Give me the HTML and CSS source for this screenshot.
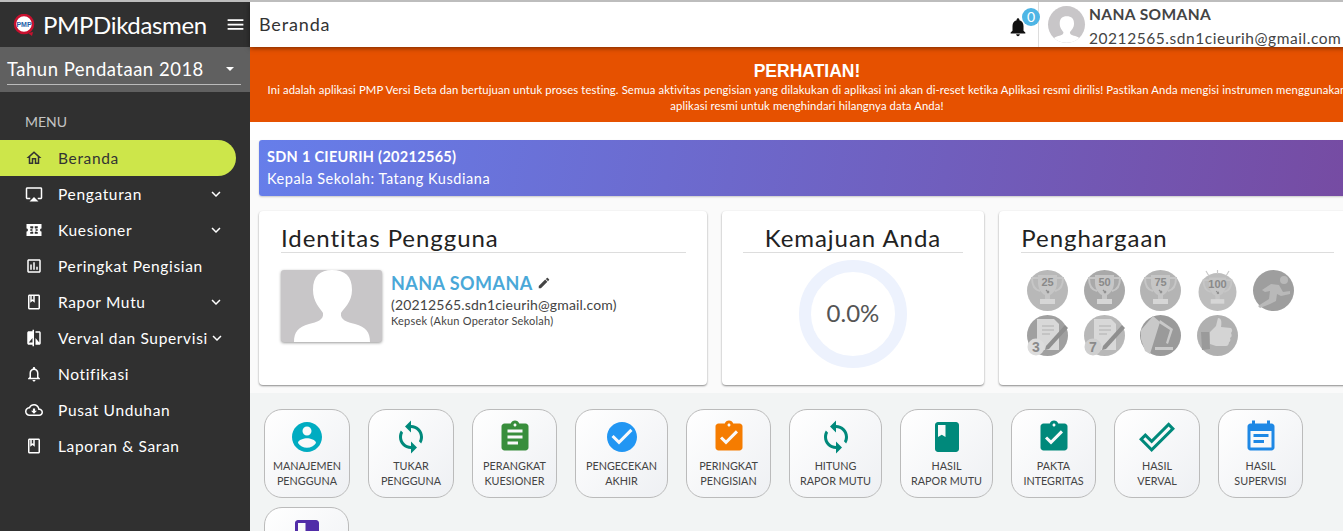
FILE: index.html
```html
<!DOCTYPE html>
<html>
	<head>
		<meta charset="UTF-8">
		<title>PMP Dikdasmen</title>
		<link rel="stylesheet" href="styles.css">
	</head>
	<body>
		<svg class="sprite">
			<symbol id="i-home" viewBox="0 0 24 24"><path d="M12 5.69l5 4.500V18h-2v-6H9v6H7v-7.810l5-4.500M12 3L2 12h3v8h6v-6h2v6h6v-8h3L12 3z"/></symbol>
			<symbol id="i-airplay" viewBox="0 0 24 24"><path d="M6 22h12l-6-6zM21 3H3c-1.100 0-2 .9-2 2v12c0 1.100.9 2 2 2h4v-2H3V5h18v12h-4v2h4c1.100 0 2-.9 2-2V5c0-1.100-.9-2-2-2z"/></symbol>
			<symbol id="i-ticket" viewBox="0 0 24 24"><path fill-rule="evenodd" d="M2 4h20v6c-1.100 0-2 .9-2 2s.9 2 2 2v6H2v-6c1.100 0 2-.9 2-2s-.9-2-2-2V4zm5 3v2.500h2v1.500H7v2h2v1.500H7V17h4v-2.500H9.800v-5H11V7H7zm6 0v2.500h1.200v5H13V17h4v-2.500h-2V13h2v-2h-2V9.500h2V7h-4z"/></symbol>
			<symbol id="i-poll" viewBox="0 0 24 24"><path d="M19 3H5c-1.100 0-2 .9-2 2v14c0 1.100.9 2 2 2h14c1.100 0 2-.9 2-2V5c0-1.100-.9-2-2-2zm0 16H5V5h14v14zM7 10h2v7H7zm4-3h2v10h-2zm4 6h2v4h-2z"/></symbol>
			<symbol id="i-book-line" viewBox="0 0 24 24"><path d="M18 2H6c-1.100 0-2 .9-2 2v16c0 1.100.9 2 2 2h12c1.100 0 2-.9 2-2V4c0-1.100-.9-2-2-2zM9 4h2v5l-1-.75L9 9V4zm9 16H6V4h1v9l3-2.250L13 13V4h5v16z"/></symbol>
			<symbol id="i-compare" viewBox="0 0 24 24"><path d="M10 3H5c-1.100 0-2 .9-2 2v14c0 1.100.9 2 2 2h5v2h2V1h-2v2zm0 15H5l5-6v6zm9-15h-5v2h5v13l-5-6v9h5c1.100 0 2-.9 2-2V5c0-1.100-.9-2-2-2z"/></symbol>
			<symbol id="i-bell-line" viewBox="0 0 24 24"><path d="M12 22c1.100 0 2-.9 2-2h-4c0 1.100.9 2 2 2zm6-6v-5c0-3.070-1.630-5.640-4.500-6.320V4c0-.83-.67-1.500-1.500-1.500s-1.500.67-1.500 1.500v.68C7.640 5.360 6 7.920 6 11v5l-2 2v1h16v-1l-2-2zm-2 1H8v-6c0-2.480 1.510-4.500 4-4.500s4 2.020 4 4.500v6z"/></symbol>
			<symbol id="i-cloud" viewBox="0 0 24 24"><path d="M19.350 10.040C18.670 6.590 15.640 4 12 4 9.110 4 6.600 5.640 5.350 8.040 2.340 8.360 0 10.910 0 14c0 3.310 2.690 6 6 6h13c2.760 0 5-2.240 5-5 0-2.640-2.050-4.780-4.650-4.960zM19 18H6c-2.210 0-4-1.790-4-4 0-2.050 1.530-3.760 3.560-3.970l1.070-.11.5-.95C8.080 7.140 9.940 6 12 6c2.620 0 4.880 1.860 5.390 4.430l.3 1.500 1.530.11c1.560.1 2.780 1.410 2.780 2.960 0 1.650-1.350 3-3 3zm-5.550-8h-2.900v3H8l4 4 4-4h-2.550z"/></symbol>
			<symbol id="i-chevron" viewBox="0 0 24 24"><path d="M16.590 8.590L12 13.170 7.410 8.590 6 10l6 6 6-6z"/></symbol>
			<symbol id="i-menu" viewBox="0 0 24 24"><path d="M3 18h18v-2H3v2zm0-5h18v-2H3v2zm0-7v2h18V6H3z"/></symbol>
			<symbol id="i-bell" viewBox="0 0 24 24"><path d="M12 22c1.100 0 2-.9 2-2h-4c0 1.100.89 2 2 2zm6-6v-5c0-3.070-1.640-5.640-4.500-6.320V4c0-.83-.67-1.500-1.500-1.500s-1.500.67-1.500 1.500v.68C7.630 5.360 6 7.920 6 11v5l-2 2v1h16v-1l-2-2z"/></symbol>
			<symbol id="i-edit" viewBox="0 0 24 24"><path d="M3 17.250V21h3.750L17.810 9.940l-3.750-3.750L3 17.250zM20.710 7.040c.39-.39.39-1.020 0-1.410l-2.340-2.340c-.39-.39-1.020-.39-1.410 0l-1.830 1.830 3.750 3.750 1.830-1.830z"/></symbol>
			<symbol id="i-person" viewBox="0 0 24 24"><path d="M12 2C6.480 2 2 6.480 2 12s4.480 10 10 10 10-4.480 10-10S17.520 2 12 2zm0 3c1.660 0 3 1.340 3 3s-1.340 3-3 3-3-1.340-3-3 1.340-3 3-3zm0 14.200c-2.500 0-4.710-1.280-6-3.220.03-1.990 4-3.080 6-3.080 1.990 0 5.970 1.090 6 3.080-1.290 1.940-3.500 3.220-6 3.220z"/></symbol>
			<symbol id="i-sync" viewBox="0 0 24 24"><path d="M12 4V1L8 5l4 4V6c3.310 0 6 2.690 6 6 0 1.010-.25 1.970-.7 2.800l1.460 1.460C19.540 15.030 20 13.570 20 12c0-4.420-3.580-8-8-8zm0 14c-3.310 0-6-2.690-6-6 0-1.010.25-1.970.7-2.800L5.240 7.740C4.460 8.970 4 10.430 4 12c0 4.420 3.580 8 8 8v3l4-4-4-4v3z"/></symbol>
			<symbol id="i-assign" viewBox="0 0 24 24"><path d="M19 3h-4.180C14.400 1.840 13.300 1 12 1c-1.300 0-2.400.84-2.820 2H5c-1.100 0-2 .9-2 2v14c0 1.100.9 2 2 2h14c1.100 0 2-.9 2-2V5c0-1.100-.9-2-2-2zm-7 0c.55 0 1 .45 1 1s-.45 1-1 1-1-.45-1-1 .45-1 1-1zm2 14H7v-2h7v2zm3-4H7v-2h10v2zm0-4H7V7h10v2z"/></symbol>
			<symbol id="i-check" viewBox="0 0 24 24"><path d="M12 2C6.480 2 2 6.480 2 12s4.480 10 10 10 10-4.480 10-10S17.520 2 12 2zm-2 15l-5-5 1.410-1.410L10 14.170l7.590-7.590L19 8l-9 9z"/></symbol>
			<symbol id="i-assign-ok" viewBox="0 0 24 24"><path d="M19 3h-4.180C14.400 1.840 13.300 1 12 1c-1.300 0-2.400.84-2.820 2H5c-1.100 0-2 .9-2 2v14c0 1.100.9 2 2 2h14c1.100 0 2-.9 2-2V5c0-1.100-.9-2-2-2zm-7 0c.55 0 1 .45 1 1s-.45 1-1 1-1-.45-1-1 .45-1 1-1zm-2 14l-4-4 1.410-1.410L10 14.170l6.590-6.590L18 9l-8 8z"/></symbol>
			<symbol id="i-book" viewBox="0 0 24 24"><path d="M18 2H6c-1.100 0-2 .9-2 2v16c0 1.100.9 2 2 2h12c1.100 0 2-.9 2-2V4c0-1.100-.9-2-2-2zM6 4h5v8l-2.500-1.500L6 12V4z"/></symbol>
			<symbol id="i-done" viewBox="0 0 24 24"><path d="M19.770 5.030l1.400 1.400L8.430 19.170l-5.600-5.600 1.400-1.400 4.200 4.200L19.770 5.030m0-2.830L8.430 13.540l-4.200-4.200L0 13.570 8.430 22 24 6.430 19.770 2.200z"/></symbol>
			<symbol id="i-event" viewBox="0 0 24 24"><path d="M17 10H7v2h10v-2zm2-7h-1V1h-2v2H8V1H6v2H5c-1.110 0-1.990.9-1.990 2L3 19c0 1.100.89 2 2 2h14c1.100 0 2-.9 2-2V5c0-1.100-.9-2-2-2zm0 16H5V8h14v11zm-5-5H7v2h7v-2z"/></symbol>
			<symbol id="i-silhouette" viewBox="0 0 101 72"><path d="M51 0C64 0 71 6 71 20C71 32 63 38 60 43C59 50 66 52 74 54C85 57 89 62 89 72H13C13 62 17 57 28 54C36 52 43 50 42 43C39 38 32 32 32 20C32 6 39 0 51 0Z"/></symbol>
			<symbol id="b-trophy" viewBox="0 0 41 41">
				<path d="M11 5h19v8c0 6-4 11-7 12v5h3v3H15v-3h3v-5c-3-1-7-6-7-12z" fill="#c6c6c6"/>
				<path d="M11 8H5c0 8 3 12 8 13M30 8h6c0 8-3 12-8 13" fill="none" stroke="#c6c6c6" stroke-width="2"/>
				<rect x="13" y="29" width="15" height="5" fill="#d6d6d6"/>
				<path d="M19 20l3 3M20 23l2-2" stroke="#8f8f8f" stroke-width="1.200"/>
			</symbol>
			<symbol id="b-paper" viewBox="0 0 41 41">
				<path d="M10 4h17l5 5v26H10z" fill="#d8d8d8"/>
				<path d="M15 11h12M15 15h12M15 19h8" stroke="#bdbdbd" stroke-width="1.500"/>
				<path d="M19 31L38 10l3 3-19 21-4 1z" fill="#8f8f8f"/>
			</symbol>
		</svg>

		<div class="page">
			<aside class="sidebar">
				<div class="brand">
					<svg class="brand-logo" viewBox="0 0 22 22">
						<circle cx="11" cy="10" r="9" fill="#fff" stroke="#c8102e" stroke-width="2.500"/>
						<path d="M15 19l5-1-1 4z" fill="#c8102e"/>
						<text x="11" y="12.500" text-anchor="middle" class="brand-mark">PMP</text>
					</svg>
					<span class="brand-name">PMPDikdasmen</span>
					<svg class="brand-menu"><use href="#i-menu"/></svg>
				</div>
				<div class="year">
					<div class="year-select">
						<span>Tahun Pendataan 2018</span>
						<i class="caret"></i>
					</div>
				</div>
				<div class="menu-label">MENU</div>
				<ul class="menu">
					<li class="current"><svg class="ico"><use href="#i-home"/></svg><span>Beranda</span></li>
					<li><svg class="ico"><use href="#i-airplay"/></svg><span>Pengaturan</span><svg class="chev"><use href="#i-chevron"/></svg></li>
					<li><svg class="ico"><use href="#i-ticket"/></svg><span>Kuesioner</span><svg class="chev"><use href="#i-chevron"/></svg></li>
					<li><svg class="ico"><use href="#i-poll"/></svg><span>Peringkat Pengisian</span></li>
					<li><svg class="ico"><use href="#i-book-line"/></svg><span>Rapor Mutu</span><svg class="chev"><use href="#i-chevron"/></svg></li>
					<li><svg class="ico"><use href="#i-compare"/></svg><span>Verval dan Supervisi</span><svg class="chev"><use href="#i-chevron"/></svg></li>
					<li><svg class="ico"><use href="#i-bell-line"/></svg><span>Notifikasi</span></li>
					<li><svg class="ico"><use href="#i-cloud"/></svg><span>Pusat Unduhan</span></li>
					<li><svg class="ico"><use href="#i-book-line"/></svg><span>Laporan &amp; Saran</span></li>
				</ul>
			</aside>

			<main class="main">
				<header class="topbar">
					<div class="topbar-title">Beranda</div>
					<div class="notif">
						<svg class="notif-bell"><use href="#i-bell"/></svg>
						<span class="notif-count">0</span>
					</div>
					<div class="user">
						<div class="user-photo"><svg><use href="#i-silhouette"/></svg></div>
						<div class="user-text">
							<div class="user-name">NANA SOMANA</div>
							<div class="user-mail">20212565.sdn1cieurih@gmail.com</div>
						</div>
					</div>
				</header>

				<section class="notice">
					<h4>PERHATIAN!</h4>
					<p>Ini adalah aplikasi PMP Versi Beta dan bertujuan untuk proses testing. Semua aktivitas pengisian yang dilakukan di aplikasi ini akan di-reset ketika Aplikasi resmi dirilis! Pastikan Anda mengisi instrumen menggunakan<br>aplikasi resmi untuk menghindari hilangnya data Anda!</p>
				</section>

				<section class="upper">
					<div class="school">
						<b>SDN 1 CIEURIH (20212565)</b>
						<span>Kepala Sekolah: Tatang Kusdiana</span>
					</div>
					<div class="cards">
						<div class="card card-id">
							<h3>Identitas Pengguna</h3>
							<div class="profile">
								<div class="profile-photo"><svg><use href="#i-silhouette"/></svg></div>
								<div>
									<div class="profile-name">NANA SOMANA <svg class="pencil"><use href="#i-edit"/></svg></div>
									<div class="profile-mail">(20212565.sdn1cieurih@gmail.com)</div>
									<div class="profile-role">Kepsek (Akun Operator Sekolah)</div>
								</div>
							</div>
						</div>
						<div class="card card-progress">
							<h3>Kemajuan Anda</h3>
							<div class="ring">0.0%</div>
						</div>
						<div class="card card-award">
							<h3>Penghargaan</h3>
							<div class="badges">
								<svg class="badge" viewBox="0 0 41 41"><circle cx="20.500" cy="20.500" r="20.500" fill="#b8b8b8"/><use href="#b-trophy" width="41" height="41"/><text x="20.500" y="16" class="badge-num">25</text></svg>
								<svg class="badge" viewBox="0 0 41 41"><circle cx="20.500" cy="20.500" r="20.500" fill="#a9a9a9"/><use href="#b-trophy" width="41" height="41"/><text x="20.500" y="16" class="badge-num">50</text></svg>
								<svg class="badge" viewBox="0 0 41 41"><circle cx="20.500" cy="20.500" r="20.500" fill="#b4b4b4"/><use href="#b-trophy" width="41" height="41"/><text x="20.500" y="16" class="badge-num">75</text></svg>
								<svg class="badge" viewBox="0 0 41 41"><circle cx="20.500" cy="22" r="19" fill="#bdbdbd"/><path d="M9 1l3 5M20.500 0v4M32 1l-3 5" stroke="#c9c9c9" stroke-width="1.200"/><use href="#b-trophy" x="2" y="3" width="37" height="37"/><text x="20.500" y="18" class="badge-num">100</text></svg>
								<svg class="badge" viewBox="0 0 41 41"><circle cx="20.500" cy="20.500" r="20.500" fill="#9e9e9e"/><circle cx="31" cy="10" r="4" fill="#b9b9b9"/><path d="M5 36l11-7 1-8-5 1-3-2 9-6 8 1 4 7 7-1v3l-9 2-4-2-1 7-6 3-10 4z" fill="#b9b9b9"/></svg>
								<svg class="badge" viewBox="0 0 41 41"><circle cx="20.500" cy="20.500" r="20.500" fill="#a0a0a0"/><use href="#b-paper" width="41" height="41"/><circle cx="9" cy="32" r="8.500" fill="#dcdcdc"/><text x="9" y="36.500" class="badge-num big">3</text></svg>
								<svg class="badge" viewBox="0 0 41 41"><circle cx="20.500" cy="20.500" r="20.500" fill="#b8b8b8"/><use href="#b-paper" width="41" height="41"/><circle cx="9" cy="32" r="8.500" fill="#cfcfcf"/><text x="9" y="36.500" class="badge-num big">7</text></svg>
								<svg class="badge" viewBox="0 0 41 41"><circle cx="20.500" cy="20.500" r="20.500" fill="#9a9a9a"/><path d="M1 15L13 1l7 6-10 32-5-3-4-12z" fill="#c9c9c9"/><path d="M20 5l13 9-5 15-2-1 4-13-11-7zM15 32h18v3H15z" fill="#c9c9c9"/></svg>
								<svg class="badge" viewBox="0 0 41 41"><circle cx="20.500" cy="20.500" r="20.500" fill="#b0b0b0"/><path d="M4 17h8l1 17-8 1z" fill="#9a9a9a"/><path d="M13 17l6-6 2-8c3 0 4 3 3 9l10 1c2 2 1 4 0 5 1 2 1 4-1 5 1 2 0 4-1 4 0 2-1 4-3 4H19l-6-2z" fill="#d4d4d4"/></svg>
							</div>
						</div>
					</div>
				</section>

				<section class="shortcuts">
					<a class="tile w86"><svg class="c-cyan"><use href="#i-person"/></svg><span>MANAJEMEN<br>PENGGUNA</span></a>
					<a class="tile w86"><svg class="c-teal"><use href="#i-sync"/></svg><span>TUKAR<br>PENGGUNA</span></a>
					<a class="tile w85"><svg class="c-green"><use href="#i-assign"/></svg><span>PERANGKAT<br>KUESIONER</span></a>
					<a class="tile w93"><svg class="c-blue"><use href="#i-check"/></svg><span>PENGECEKAN<br>AKHIR</span></a>
					<a class="tile w85"><svg class="c-orange"><use href="#i-assign-ok"/></svg><span>PERINGKAT<br>PENGISIAN</span></a>
					<a class="tile w93"><svg class="c-teal"><use href="#i-sync"/></svg><span>HITUNG<br>RAPOR MUTU</span></a>
					<a class="tile w93"><svg class="c-teal"><use href="#i-book"/></svg><span>HASIL<br>RAPOR MUTU</span></a>
					<a class="tile w85"><svg class="c-teal"><use href="#i-assign-ok"/></svg><span>PAKTA<br>INTEGRITAS</span></a>
					<a class="tile w86"><svg class="c-teal"><use href="#i-done"/></svg><span>HASIL<br>VERVAL</span></a>
					<a class="tile w85"><svg class="c-azure"><use href="#i-event"/></svg><span>HASIL<br>SUPERVISI</span></a>
					<a class="tile w85"><svg class="c-purple"><use href="#i-book"/></svg></a>
				</section>
			</main>
		</div>
	</body>
</html>
```

FILE: styles.css
```css
* {
	box-sizing: border-box;
}
html, body {
	margin: 0;
	height: 100%;
	overflow: hidden;
}
body {
	font-family: "Lato", "Liberation Sans", sans-serif;
	color: #444;
	background: #fafafa;
}
.sprite {
	display: none;
}
ul {
	list-style: none;
	margin: 0;
	padding: 0;
}
h3, h4, p {
	margin: 0;
	font-weight: 400;
}
.page {
	display: flex;
	width: 1364px;
	height: 531px;
	border-top: 2px solid #bdbdbd;
	overflow: hidden;
}

/* sidebar */
.sidebar {
	flex: none;
	width: 250px;
	background: #303030;
	color: #fff;
}
.brand {
	display: flex;
	align-items: center;
	height: 45px;
	padding-left: 13px;
}
.brand-logo {
	width: 22px;
	height: 22px;
	margin-right: 8px;
}
.brand-mark {
	font-family: "Liberation Sans", sans-serif;
	font-size: 7px;
	font-weight: 700;
	fill: #1f5fa8;
}
.brand-name {
	width: 182px;
	font-size: 24px;
	letter-spacing: -.35px;
}
.brand-menu {
	width: 21px;
	height: 21px;
	fill: #fff;
}
.year {
	height: 45px;
	padding: 6px 9px 0 7px;
	background: #606060;
}
.year-select {
	display: flex;
	align-items: center;
	justify-content: space-between;
	height: 32px;
	padding-right: 7px;
	font-size: 18.500px;
	letter-spacing: .5px;
	border-bottom: 1px solid #bbb;
}
.caret {
	border: 4.500px solid transparent;
	border-top: 4.500px solid #fff;
	border-bottom: 0;
}
.menu-label {
	padding: 20px 0 8px 25px;
	font-size: 14px;
	line-height: 20px;
	color: #c4c4c4;
}
.menu li {
	display: flex;
	align-items: center;
	width: 236px;
	height: 36px;
	padding-left: 25px;
	font-size: 15.500px;
	letter-spacing: .65px;
	border-radius: 0 18px 18px 0;
}
.menu li span {
	flex: 1;
	margin-left: 15px;
	white-space: nowrap;
}
.menu li.current {
	background: #cde64a;
	color: #333;
}
.ico {
	flex: none;
	width: 18px;
	height: 18px;
	fill: #fff;
}
.current .ico {
	fill: #333;
}
.chev {
	flex: none;
	width: 18px;
	height: 18px;
	margin-right: 11px;
	fill: #fff;
}

/* top bar */
.main {
	flex: none;
	width: 1114px;
}
.topbar {
	position: relative;
	z-index: 2;
	display: flex;
	align-items: center;
	height: 45px;
	background: #fff;
	box-shadow: 0 1px 5px rgba(0,0,0,.5);
}
.topbar-title {
	flex: 1;
	padding: 0 0 2px 9px;
	font-size: 18px;
	letter-spacing: .85px;
	color: #333;
}
.notif {
	position: relative;
	width: 30px;
	height: 45px;
}
.notif-bell {
	position: absolute;
	left: -1px;
	top: 14px;
	width: 22px;
	height: 22px;
	fill: #111;
}
.notif-count {
	position: absolute;
	left: 14px;
	top: 6px;
	width: 18px;
	height: 18px;
	border-radius: 50%;
	background: #4db5e5;
	color: #fff;
	font-size: 14px;
	line-height: 18px;
	text-align: center;
}
.user {
	display: flex;
	align-items: center;
	width: 326px;
	height: 45px;
	padding-left: 9px;
	border-left: 1px solid #ddd;
}
.user-photo {
	flex: none;
	width: 37px;
	height: 37px;
	border-radius: 50%;
	overflow: hidden;
	background: #c8c6c8;
}
.user-photo svg {
	display: block;
	width: 37px;
	height: 37px;
	fill: #fff;
	transform: translateY(5px);
}
.user-text {
	margin-left: 4px;
	padding-top: 3px;
	font-size: 15.500px;
	line-height: 24px;
	white-space: nowrap;
	color: #444;
}
.user-name {
	font-weight: 700;
	letter-spacing: .4px;
}
.user-mail {
	letter-spacing: .55px;
}

/* orange notice */
.notice {
	height: 75px;
	padding-top: 13px;
	background: #e65100;
	color: #fff;
	text-align: center;
}
.notice h4 {
	font-family: "Liberation Sans", sans-serif;
	font-size: 17.500px;
	font-weight: 700;
	line-height: 22px;
}
.notice p {
	font-size: 11.300px;
	line-height: 16px;
	letter-spacing: .11px;
	white-space: nowrap;
}

/* school and cards */
.upper {
	height: 271px;
	padding: 18px 9px 0;
	background: linear-gradient(#fff, #fff 18px, #fafafa 18px);
}
.school {
	display: flex;
	flex-direction: column;
	justify-content: center;
	height: 56px;
	padding-left: 8px;
	border-radius: 3px;
	background: linear-gradient(100deg, #667eea, #764ba2);
	color: #fff;
	font-size: 14.500px;
	line-height: 22px;
	letter-spacing: .3px;
	box-shadow: 0 1px 2px rgba(0,0,0,.2);
}
.school span {
	letter-spacing: .55px;
}
.cards {
	display: flex;
	gap: 15px;
	margin-top: 15px;
}
.card {
	height: 174px;
	padding: 0 21px 0 22px;
	border-radius: 4px;
	background: #fff;
	box-shadow: 0 1px 2px rgba(0,0,0,.45);
}
.card h3 {
	height: 42px;
	padding-top: 12px;
	font-size: 24px;
	line-height: 30px;
	letter-spacing: .95px;
	color: #222;
	border-bottom: 1px solid #ddd;
}
.card-id {
	width: 448px;
}
.card-progress {
	width: 263px;
	padding: 0 21px;
}
.card-progress h3 {
	text-align: center;
}
.card-award {
	width: 356px;
}
.profile {
	display: flex;
	margin-top: 17px;
}
.profile-photo {
	flex: none;
	width: 101px;
	height: 72px;
	margin-right: 9px;
	border-radius: 3px;
	background: #c8c6c8;
	box-shadow: 0 1px 3px rgba(0,0,0,.4);
	overflow: hidden;
}
.profile-photo svg {
	display: block;
	width: 101px;
	height: 72px;
	fill: #fff;
}
.profile-name {
	display: flex;
	align-items: center;
	gap: 4px;
	height: 26px;
	font-size: 18px;
	font-weight: 700;
	letter-spacing: .45px;
	color: #4aa8d8;
}
.pencil {
	width: 14px;
	height: 14px;
	fill: #444;
}
.profile-mail {
	font-size: 14px;
	line-height: 18px;
	letter-spacing: .17px;
}
.profile-role {
	font-size: 11px;
	line-height: 14px;
	letter-spacing: .22px;
}
.ring {
	display: flex;
	align-items: center;
	justify-content: center;
	width: 108px;
	height: 108px;
	margin: 7px auto 0;
	padding-bottom: 3px;
	border: 12px solid #edf2fd;
	border-radius: 50%;
	font-size: 24px;
	color: #555;
}
.badges {
	display: grid;
	grid-template-columns: repeat(5, 41px);
	gap: 4px 15.500px;
	margin: 17px 0 0 6px;
}
.badge {
	display: block;
	width: 41px;
	height: 41px;
}
.badge-num {
	font-family: "Liberation Sans Narrow", "Liberation Sans", sans-serif;
	font-size: 11px;
	font-weight: 700;
	text-anchor: middle;
	fill: #8a8a8a;
}
.badge-num.big {
	font-size: 14px;
}

/* shortcut tiles */
.shortcuts {
	display: flex;
	flex-wrap: wrap;
	align-content: flex-start;
	gap: 9px 18px;
	height: 138px;
	padding: 16px 0 0 14px;
	background: #f2f4f4;
	overflow: hidden;
}
.tile {
	display: flex;
	flex-direction: column;
	align-items: center;
	height: 89px;
	padding-top: 9px;
	border: 1px solid #bbb;
	border-radius: 18px;
	background: linear-gradient(135deg, #fff, #eef0f3);
	font-size: 10.800px;
	line-height: 15px;
	text-align: center;
	color: #444;
	white-space: nowrap;
}
.tile svg {
	flex: none;
	width: 36px;
	height: 36px;
	margin-bottom: 3px;
}
.w85 {
	width: 85px;
}
.w86 {
	width: 86px;
}
.w93 {
	width: 93px;
}
.c-cyan {
	fill: #00acc1;
}
.c-teal {
	fill: #00897b;
}
.c-green {
	fill: #388e3c;
}
.c-blue {
	fill: #2196f3;
}
.c-orange {
	fill: #f57c00;
}
.c-azure {
	fill: #1e88e5;
}
.c-purple {
	fill: #512da8;
}
```
